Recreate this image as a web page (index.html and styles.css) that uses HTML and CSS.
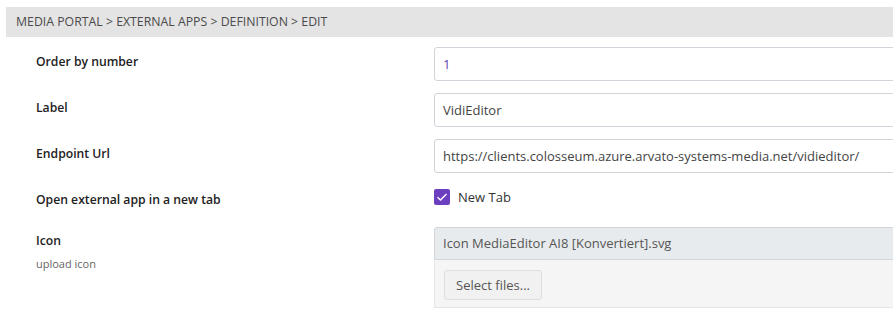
FILE: index.html
```html
<!DOCTYPE html>
<html>
<head>
<meta charset="utf-8">
<link rel="stylesheet" href="styles.css">
</head>
<body>
<div class="breadcrumb">MEDIA PORTAL &gt; EXTERNAL APPS &gt; DEFINITION &gt; EDIT</div>
<form class="form">
  <div class="row">
    <div class="label"><span class="title">Order by number</span></div>
    <div class="field"><div class="input num">1</div></div>
  </div>
  <div class="row">
    <div class="label"><span class="title">Label</span></div>
    <div class="field"><div class="input">VidiEditor</div></div>
  </div>
  <div class="row">
    <div class="label"><span class="title">Endpoint Url</span></div>
    <div class="field"><div class="input">https://clients.colosseum.azure.arvato-systems-media.net/vidieditor/</div></div>
  </div>
  <div class="row check-row">
    <div class="label"><span class="title">Open external app in a new tab</span></div>
    <div class="field check-field">
      <span class="checkbox"><svg width="16" height="16" viewBox="0 0 16 16"><path d="M3.5 8.3 L6.5 11 L12.5 5" fill="none" stroke="#fff" stroke-width="1.4"/></svg></span>
      <span class="check-label">New Tab</span>
    </div>
  </div>
  <div class="row icon-row">
    <div class="label"><span class="title">Icon</span><span class="hint">upload icon</span></div>
    <div class="field">
      <div class="upload">
        <div class="filename">Icon MediaEditor AI8 [Konvertiert].svg</div>
        <div class="dropzone"><span class="btn">Select files...</span></div>
      </div>
    </div>
  </div>
</form>
</body>
</html>
```
FILE: styles.css
```css
html, body {
  margin: 0;
  padding: 0;
  background: #fff;
  overflow: hidden;
}
body {
  font-family: "Open Sans", "Noto Sans", sans-serif;
  color: #222;
  width: 893px;
}
.breadcrumb {
  margin: 7px 0 0 6px;
  height: 30px;
  line-height: 30px;
  padding-left: 10px;
  background: #e4e4e4;
  font-size: 12.3px;
  color: #4a4a4a;
}
.form {
  padding-top: 10px;
}
.row {
  display: grid;
  grid-template-columns: 434px 480px;
  height: 46px;
}
.label {
  padding-left: 36px;
  display: flex;
  flex-direction: column;
}
.title {
  font-size: 12.2px;
  font-weight: 600;
  line-height: 18px;
  padding-top: 6px;
  color: #222;
}
.field {
  min-width: 0;
}
.input {
  box-sizing: border-box;
  height: 34px;
  border: 1px solid #cfd4da;
  border-radius: 3px;
  padding: 0 8px;
  line-height: 32px;
  font-size: 13px;
  color: #444;
  white-space: nowrap;
  width: 480px;
}
.input.num {
  color: #5b3fa8;
}
.check-row {
  height: 42px;
}
.check-field {
  display: flex;
  align-items: center;
  gap: 8px;
  height: 24px;
}
.checkbox {
  width: 16px;
  height: 16px;
  background: #6c3fc0;
  border-radius: 2px;
  display: block;
}
.checkbox svg {
  display: block;
}
.check-label {
  font-size: 13px;
  color: #333;
}
.icon-row {
  height: auto;
}
.icon-row .title {
  padding-top: 5px;
}
.hint {
  font-size: 11px;
  color: #666;
  line-height: 16px;
  padding-top: 6px;
}
.upload {
  width: 480px;
  box-sizing: border-box;
}
.filename {
  box-sizing: border-box;
  height: 33px;
  background: #e8ebee;
  border: 1px solid #d3d7db;
  border-radius: 3px 0 0 0;
  padding: 0 8px;
  line-height: 31px;
  font-size: 13px;
  color: #555;
  white-space: nowrap;
}
.dropzone {
  box-sizing: border-box;
  height: 48px;
  background: #f5f5f5;
  border: 1px solid #e6e6e6;
  border-top: none;
  padding: 10px 0 0 9px;
}
.btn {
  display: inline-block;
  box-sizing: border-box;
  width: 98px;
  height: 30px;
  line-height: 28px;
  text-align: center;
  border: 1px solid #dedede;
  border-radius: 3px;
  background: #f1f1f1;
  font-size: 13px;
  color: #555;
}
```
